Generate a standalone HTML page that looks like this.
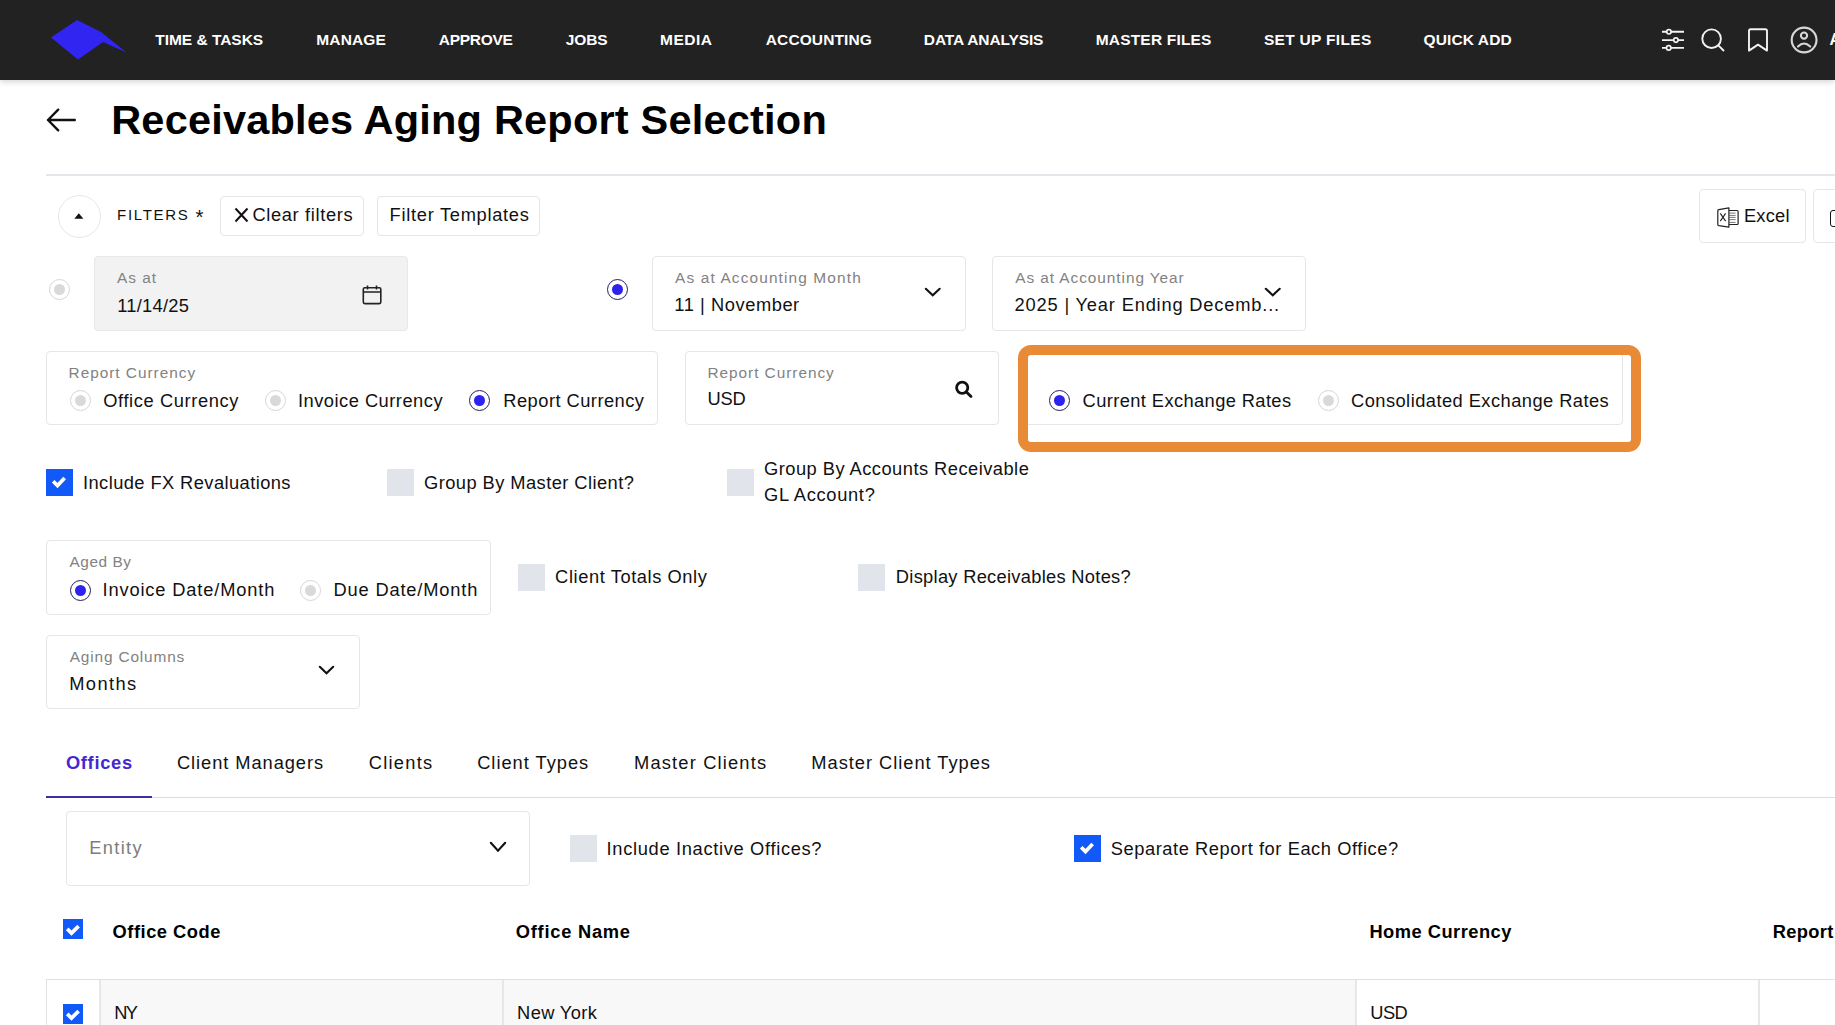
<!DOCTYPE html>
<html><head><meta charset="utf-8"><style>
html,body{margin:0;padding:0;width:1835px;height:1025px;overflow:hidden;background:#fff;position:relative}
.t{position:absolute;white-space:pre;font-family:'Liberation Sans', sans-serif}
.b{position:absolute}
</style></head><body>
<div class="b" style="left:0;top:0;width:1835px;height:80px;background:#222;box-shadow:0 2px 6px rgba(0,0,0,.17)"></div>
<svg class="b" style="left:0;top:0" width="140" height="80"><polygon points="51,37.5 77,20 101,32 126.5,52.5 103,42 78,59.5" fill="#3125f2"/></svg>
<svg class="b" style="left:1655px;top:20px" width="180" height="40" fill="none" stroke="#f2f2f2" stroke-width="1.9" stroke-linejoin="round">
 <g transform="translate(-1655,-20)">
  <path d="M1662 31.8 H1684 M1662 40.1 H1684 M1662 47.9 H1684"/>
  <circle cx="1668.9" cy="31.8" r="2.2" fill="#222" stroke-width="1.7"/>
  <circle cx="1675.9" cy="40.1" r="2.2" fill="#222" stroke-width="1.7"/>
  <circle cx="1668.7" cy="47.9" r="2.2" fill="#222" stroke-width="1.7"/>
  <circle cx="1711.6" cy="38.7" r="9.3"/>
  <path d="M1718.3 45.4 L1724 51"/>
  <path d="M1749 31 Q1749 29.3 1750.7 29.3 H1765.3 Q1767 29.3 1767 31 V50.6 L1758 44.6 L1749 50.6 Z"/>
  <circle cx="1804.1" cy="40" r="12.4" stroke="#d8d8d8" stroke-width="2.1"/>
  <circle cx="1804" cy="35.6" r="3.1" stroke="#d8d8d8" stroke-width="2.1"/>
  <path d="M1798 46.6 Q1804 40.5 1810.2 46.6" stroke="#d8d8d8" stroke-width="2.1" stroke-linecap="round"/>
 </g></svg>
<div class="t" style="left:1829.5px;top:28.5px;font-size:15.9px;line-height:22px;font-weight:700;color:#fff">A</div>
<svg class="b" style="left:40px;top:100px" width="45" height="40" fill="none" stroke="#111" stroke-width="2.4" stroke-linecap="round" stroke-linejoin="round"><path d="M8 20 H34.8 M18.2 9.7 L8 20 L18.2 30.3"/></svg>
<div class="b" style="left:46px;top:174px;width:1789px;height:2px;background:#e3e6ea"></div>
<div class="b" style="left:58px;top:195px;width:41px;height:41px;border:1px solid #e6e6e6;border-radius:50%"></div>
<svg class="b" style="left:70px;top:208px" width="20" height="16"><polygon points="4.3,10.8 8.8,5.3 13.4,10.8" fill="#111"/></svg>
<div class="b" style="left:220px;top:196px;width:142px;height:38px;border:1px solid #e6e6e6;border-radius:4px;background:#fff"></div>
<svg class="b" style="left:230px;top:203px" width="24" height="24" fill="none" stroke="#111" stroke-width="2"><path d="M5.5 5.5 L17.5 18.5 M17.5 5.5 L5.5 18.5"/></svg>
<div class="b" style="left:377px;top:196px;width:161px;height:38px;border:1px solid #e6e6e6;border-radius:4px;background:#fff"></div>
<div class="b" style="left:1699px;top:189px;width:105px;height:52px;border:1px solid #e6e6e6;border-radius:4px;background:#fff"></div>
<div class="b" style="left:1813px;top:189px;width:85px;height:52px;border:1px solid #e6e6e6;border-radius:4px;background:#fff"></div>
<svg class="b" style="left:1712px;top:202px" width="32" height="32" fill="none" stroke="#222" stroke-width="1.2" stroke-linejoin="round">
 <path d="M5.8 8.9 Q5.8 7.9 6.8 7.7 L16.9 5.9 V25.1 L6.8 23.6 Q5.8 23.4 5.8 22.4 Z"/>
 <path d="M16.9 8.5 H25.1 Q26.1 8.5 26.1 9.5 V21.5 Q26.1 22.5 25.1 22.5 H16.9"/>
 <path d="M17 11.1 H23.6 M17 13.4 H23.6 M17 15.4 H23.6 M17 17.6 H23.6 M17 20.4 H23.6" stroke-width="0.8" stroke="#555"/>
 <path d="M8.3 11.4 L13.6 19.1 M13.6 11.4 L8.3 19.1" stroke-width="1.1"/>
</svg>
<div class="b" style="left:1830px;top:210px;width:14px;height:17px;box-sizing:border-box;border:1.7px solid #111;border-radius:3px"></div>
<div class="b" style="left:49px;top:279px;width:19px;height:19px;border:1px solid #d6d6d6;border-radius:50%;background:#fff"></div><div class="b" style="left:54px;top:284px;width:11px;height:11px;border-radius:50%;background:#d9d9d9"></div>
<div class="b" style="left:94px;top:256px;width:312px;height:73px;border:1px solid #e8e8e8;border-radius:4px;background:#f2f2f2"></div>
<svg class="b" style="left:355px;top:280px" width="34" height="30" fill="none" stroke="#222" stroke-width="1.6">
 <rect x="8.3" y="7.8" width="17.5" height="15.8" rx="1.5"/>
 <path d="M8.3 12 H25.8 M12.5 5.5 V9.5 M21.5 5.5 V9.5"/>
</svg>
<div class="b" style="left:607px;top:279px;width:19px;height:19px;border:1px solid #22205e;border-radius:50%;background:#fff"></div><div class="b" style="left:612px;top:284px;width:11px;height:11px;border-radius:50%;background:#2e22ee"></div>
<div class="b" style="left:652px;top:256px;width:312px;height:73px;border:1px solid #e6e6e6;border-radius:4px;background:#fff"></div>
<svg class="b" style="left:923px;top:286px" width="19.5" height="12.5"><path d="M2.8 2.8 L9.75 9.2 L16.7 2.8" fill="none" stroke="#111" stroke-width="2.1" stroke-linecap="round" stroke-linejoin="miter"/></svg>
<div class="b" style="left:992px;top:256px;width:312px;height:73px;border:1px solid #e6e6e6;border-radius:4px;background:#fff"></div>
<svg class="b" style="left:1263px;top:285.5px" width="19.5" height="12.5"><path d="M2.8 2.8 L9.75 9.2 L16.7 2.8" fill="none" stroke="#111" stroke-width="2.1" stroke-linecap="round" stroke-linejoin="miter"/></svg>
<div class="b" style="left:46px;top:351px;width:610px;height:72px;border:1px solid #e6e6e6;border-radius:4px;background:#fff"></div>
<div class="b" style="left:70px;top:390px;width:19px;height:19px;border:1px solid #d6d6d6;border-radius:50%;background:#fff"></div><div class="b" style="left:75px;top:395px;width:11px;height:11px;border-radius:50%;background:#d9d9d9"></div>
<div class="b" style="left:265px;top:390px;width:19px;height:19px;border:1px solid #d6d6d6;border-radius:50%;background:#fff"></div><div class="b" style="left:270px;top:395px;width:11px;height:11px;border-radius:50%;background:#d9d9d9"></div>
<div class="b" style="left:469px;top:390px;width:19px;height:19px;border:1px solid #22205e;border-radius:50%;background:#fff"></div><div class="b" style="left:474px;top:395px;width:11px;height:11px;border-radius:50%;background:#2e22ee"></div>
<div class="b" style="left:685px;top:351px;width:312px;height:72px;border:1px solid #e6e6e6;border-radius:4px;background:#fff"></div>
<svg class="b" style="left:950px;top:376px" width="28" height="28" fill="none" stroke="#111" stroke-width="2.8"><circle cx="12.2" cy="11.8" r="5.6"/><path d="M16.4 16 L21 20.6" stroke-linecap="round"/></svg>
<div class="b" style="left:1024px;top:351px;width:597px;height:72px;border:1px solid #e6e6e6;border-radius:4px;background:#fff"></div>
<div class="b" style="left:1049px;top:390px;width:19px;height:19px;border:1px solid #22205e;border-radius:50%;background:#fff"></div><div class="b" style="left:1054px;top:395px;width:11px;height:11px;border-radius:50%;background:#2e22ee"></div>
<div class="b" style="left:1318px;top:390px;width:19px;height:19px;border:1px solid #d6d6d6;border-radius:50%;background:#fff"></div><div class="b" style="left:1323px;top:395px;width:11px;height:11px;border-radius:50%;background:#d9d9d9"></div>
<div class="b" style="left:1018px;top:345px;width:623px;height:107px;box-sizing:border-box;border:10.5px solid #e98a37;border-radius:13px"></div>
<div class="b" style="left:46px;top:469px;width:27px;height:27px;background:#1159f9"></div><svg class="b" style="left:46px;top:469px" width="27" height="27"><path d="M7.2 12.2 L11.5 16.5 L18.65 9" fill="none" stroke="#fff" stroke-width="3.7"/></svg>
<div class="b" style="left:387px;top:469px;width:27px;height:27px;background:#e1e4ea"></div>
<div class="b" style="left:727px;top:469px;width:27px;height:27px;background:#e1e4ea"></div>
<div class="b" style="left:46px;top:540px;width:443px;height:73px;border:1px solid #e6e6e6;border-radius:4px;background:#fff"></div>
<div class="b" style="left:70px;top:580px;width:19px;height:19px;border:1px solid #22205e;border-radius:50%;background:#fff"></div><div class="b" style="left:75px;top:585px;width:11px;height:11px;border-radius:50%;background:#2e22ee"></div>
<div class="b" style="left:300px;top:580px;width:19px;height:19px;border:1px solid #d6d6d6;border-radius:50%;background:#fff"></div><div class="b" style="left:305px;top:585px;width:11px;height:11px;border-radius:50%;background:#d9d9d9"></div>
<div class="b" style="left:518px;top:564px;width:27px;height:27px;background:#e1e4ea"></div>
<div class="b" style="left:858px;top:564px;width:27px;height:27px;background:#e1e4ea"></div>
<div class="b" style="left:46px;top:635px;width:312px;height:72px;border:1px solid #e6e6e6;border-radius:4px;background:#fff"></div>
<svg class="b" style="left:317px;top:664px" width="19" height="12.5"><path d="M2.8 2.8 L9.5 9.2 L16.2 2.8" fill="none" stroke="#111" stroke-width="2.1" stroke-linecap="round" stroke-linejoin="miter"/></svg>
<div class="b" style="left:46px;top:797px;width:1789px;height:1px;background:#dcdcdc"></div>
<div class="b" style="left:46px;top:796px;width:106px;height:1.5px;background:#3d2f9e"></div>
<div class="b" style="left:66px;top:811px;width:462px;height:73px;border:1px solid #e6e6e6;border-radius:4px;background:#fff"></div>
<svg class="b" style="left:487.5px;top:840px" width="20.0" height="14"><path d="M2.8 2.8 L10.0 10.7 L17.2 2.8" fill="none" stroke="#111" stroke-width="2.1" stroke-linecap="round" stroke-linejoin="miter"/></svg>
<div class="b" style="left:570px;top:835px;width:27px;height:27px;background:#e1e4ea"></div>
<div class="b" style="left:1074px;top:835px;width:27px;height:27px;background:#1159f9"></div><svg class="b" style="left:1074px;top:835px" width="27" height="27"><path d="M7.2 12.2 L11.5 16.5 L18.65 9" fill="none" stroke="#fff" stroke-width="3.7"/></svg>
<div class="b" style="left:63px;top:919px;width:20px;height:20px;background:#1159f9"></div><svg class="b" style="left:63px;top:919px" width="20" height="20"><path d="M4.2 9.9 L8.5 14.1 L15.6 7.1" fill="none" stroke="#fff" stroke-width="3.7"/></svg>
<div class="b" style="left:100px;top:979px;width:1256px;height:46px;background:#f8f8f9"></div>
<div class="b" style="left:46px;top:979px;width:1789px;height:1px;background:#e1e1e1"></div>
<div class="b" style="left:46px;top:979px;width:1px;height:46px;background:#e1e1e1"></div>
<div class="b" style="left:99px;top:980px;width:2px;height:45px;background:#e7e7e7"></div>
<div class="b" style="left:502px;top:980px;width:2px;height:45px;background:#e7e7e7"></div>
<div class="b" style="left:1355px;top:980px;width:2px;height:45px;background:#e7e7e7"></div>
<div class="b" style="left:1758px;top:980px;width:2px;height:45px;background:#e7e7e7"></div>
<div class="b" style="left:63px;top:1004px;width:20px;height:20px;background:#1159f9"></div><svg class="b" style="left:63px;top:1004px" width="20" height="20"><path d="M4.2 9.9 L8.5 14.1 L15.6 7.1" fill="none" stroke="#fff" stroke-width="3.7"/></svg>
<div class="t" style="left:155.2px;top:30px;font-size:15.5px;line-height:20px;font-weight:700;color:#fff;letter-spacing:-0.018px">TIME &amp; TASKS</div>
<div class="t" style="left:316.3px;top:30px;font-size:15.5px;line-height:20px;font-weight:700;color:#fff;letter-spacing:0.140px">MANAGE</div>
<div class="t" style="left:438.8px;top:30px;font-size:15.5px;line-height:20px;font-weight:700;color:#fff;letter-spacing:-0.300px">APPROVE</div>
<div class="t" style="left:565.7px;top:30px;font-size:15.5px;line-height:20px;font-weight:700;color:#fff;letter-spacing:-0.067px">JOBS</div>
<div class="t" style="left:660.0px;top:30px;font-size:15.5px;line-height:20px;font-weight:700;color:#fff;letter-spacing:0.500px">MEDIA</div>
<div class="t" style="left:765.8px;top:30px;font-size:15.5px;line-height:20px;font-weight:700;color:#fff;letter-spacing:0.100px">ACCOUNTING</div>
<div class="t" style="left:923.8px;top:30px;font-size:15.5px;line-height:20px;font-weight:700;color:#fff;letter-spacing:-0.100px">DATA ANALYSIS</div>
<div class="t" style="left:1095.7px;top:30px;font-size:15.5px;line-height:20px;font-weight:700;color:#fff;letter-spacing:0.191px">MASTER FILES</div>
<div class="t" style="left:1263.9px;top:30px;font-size:15.5px;line-height:20px;font-weight:700;color:#fff;letter-spacing:0.309px">SET UP FILES</div>
<div class="t" style="left:1423.6px;top:30px;font-size:15.5px;line-height:20px;font-weight:700;color:#fff;letter-spacing:0.100px">QUICK ADD</div>
<div class="t" style="left:111.2px;top:93px;font-size:41.5px;line-height:54px;font-weight:700;color:#000;letter-spacing:0.206px">Receivables Aging Report Selection</div>
<div class="t" style="left:117.1px;top:205px;font-size:15.0px;line-height:20px;font-weight:400;color:#111;letter-spacing:1.700px">FILTERS</div>
<div class="t" style="left:195.5px;top:203px;font-size:20.5px;line-height:27px;font-weight:400;color:#111;letter-spacing:0.000px">*</div>
<div class="t" style="left:252.4px;top:203px;font-size:18.3px;line-height:24px;font-weight:400;color:#111;letter-spacing:0.650px">Clear filters</div>
<div class="t" style="left:389.6px;top:203px;font-size:18.3px;line-height:24px;font-weight:400;color:#111;letter-spacing:0.707px">Filter Templates</div>
<div class="t" style="left:1743.9px;top:204px;font-size:18.3px;line-height:24px;font-weight:400;color:#111;letter-spacing:0.225px">Excel</div>
<div class="t" style="left:117.0px;top:268px;font-size:15.4px;line-height:20px;font-weight:400;color:#828282;letter-spacing:1.000px">As at</div>
<div class="t" style="left:117.3px;top:294px;font-size:18.3px;line-height:24px;font-weight:400;color:#111;letter-spacing:0.243px">11/14/25</div>
<div class="t" style="left:675.1px;top:268px;font-size:15.4px;line-height:20px;font-weight:400;color:#828282;letter-spacing:1.138px">As at Accounting Month</div>
<div class="t" style="left:674.3px;top:293px;font-size:18.3px;line-height:24px;font-weight:400;color:#111;letter-spacing:0.558px">11 | November</div>
<div class="t" style="left:1015.2px;top:268px;font-size:15.4px;line-height:20px;font-weight:400;color:#828282;letter-spacing:0.940px">As at Accounting Year</div>
<div class="t" style="left:1014.6px;top:293px;font-size:18.3px;line-height:24px;font-weight:400;color:#111;letter-spacing:0.815px">2025 | Year Ending Decemb...</div>
<div class="t" style="left:68.6px;top:363px;font-size:15.4px;line-height:20px;font-weight:400;color:#828282;letter-spacing:0.971px">Report Currency</div>
<div class="t" style="left:103.2px;top:389px;font-size:18.3px;line-height:24px;font-weight:400;color:#111;letter-spacing:0.614px">Office Currency</div>
<div class="t" style="left:297.9px;top:389px;font-size:18.3px;line-height:24px;font-weight:400;color:#111;letter-spacing:0.500px">Invoice Currency</div>
<div class="t" style="left:503.3px;top:389px;font-size:18.3px;line-height:24px;font-weight:400;color:#111;letter-spacing:0.471px">Report Currency</div>
<div class="t" style="left:707.4px;top:363px;font-size:15.4px;line-height:20px;font-weight:400;color:#828282;letter-spacing:0.964px">Report Currency</div>
<div class="t" style="left:707.4px;top:387px;font-size:18.3px;line-height:24px;font-weight:400;color:#111;letter-spacing:-0.200px">USD</div>
<div class="t" style="left:1082.6px;top:389px;font-size:18.3px;line-height:24px;font-weight:400;color:#111;letter-spacing:0.395px">Current Exchange Rates</div>
<div class="t" style="left:1351.0px;top:389px;font-size:18.3px;line-height:24px;font-weight:400;color:#111;letter-spacing:0.454px">Consolidated Exchange Rates</div>
<div class="t" style="left:83.0px;top:471px;font-size:18.3px;line-height:24px;font-weight:400;color:#111;letter-spacing:0.423px">Include FX Revaluations</div>
<div class="t" style="left:424.0px;top:471px;font-size:18.3px;line-height:24px;font-weight:400;color:#111;letter-spacing:0.441px">Group By Master Client?</div>
<div class="t" style="left:764.0px;top:457px;font-size:18.3px;line-height:24px;font-weight:400;color:#111;letter-spacing:0.474px">Group By Accounts Receivable</div>
<div class="t" style="left:764.0px;top:483px;font-size:18.3px;line-height:24px;font-weight:400;color:#111;letter-spacing:0.680px">GL Account?</div>
<div class="t" style="left:69.5px;top:552px;font-size:15.4px;line-height:20px;font-weight:400;color:#828282;letter-spacing:0.533px">Aged By</div>
<div class="t" style="left:102.5px;top:578px;font-size:18.3px;line-height:24px;font-weight:400;color:#111;letter-spacing:0.841px">Invoice Date/Month</div>
<div class="t" style="left:333.5px;top:578px;font-size:18.3px;line-height:24px;font-weight:400;color:#111;letter-spacing:0.823px">Due Date/Month</div>
<div class="t" style="left:555.1px;top:565px;font-size:18.3px;line-height:24px;font-weight:400;color:#111;letter-spacing:0.582px">Client Totals Only</div>
<div class="t" style="left:895.8px;top:565px;font-size:18.3px;line-height:24px;font-weight:400;color:#111;letter-spacing:0.292px">Display Receivables Notes?</div>
<div class="t" style="left:69.7px;top:647px;font-size:15.4px;line-height:20px;font-weight:400;color:#828282;letter-spacing:0.850px">Aging Columns</div>
<div class="t" style="left:69.2px;top:672px;font-size:18.3px;line-height:24px;font-weight:400;color:#111;letter-spacing:1.420px">Months</div>
<div class="t" style="left:65.9px;top:751px;font-size:18.3px;line-height:24px;font-weight:700;color:#4327d0;letter-spacing:0.700px">Offices</div>
<div class="t" style="left:176.9px;top:751px;font-size:18.3px;line-height:24px;font-weight:400;color:#111;letter-spacing:0.936px">Client Managers</div>
<div class="t" style="left:368.7px;top:751px;font-size:18.3px;line-height:24px;font-weight:400;color:#111;letter-spacing:1.283px">Clients</div>
<div class="t" style="left:477.2px;top:751px;font-size:18.3px;line-height:24px;font-weight:400;color:#111;letter-spacing:0.982px">Client Types</div>
<div class="t" style="left:634.1px;top:751px;font-size:18.3px;line-height:24px;font-weight:400;color:#111;letter-spacing:1.162px">Master Clients</div>
<div class="t" style="left:811.3px;top:751px;font-size:18.3px;line-height:24px;font-weight:400;color:#111;letter-spacing:0.967px">Master Client Types</div>
<div class="t" style="left:89.2px;top:836px;font-size:18.3px;line-height:24px;font-weight:400;color:#7d7d7d;letter-spacing:1.340px">Entity</div>
<div class="t" style="left:606.6px;top:837px;font-size:18.3px;line-height:24px;font-weight:400;color:#111;letter-spacing:0.671px">Include Inactive Offices?</div>
<div class="t" style="left:1110.7px;top:837px;font-size:18.3px;line-height:24px;font-weight:400;color:#111;letter-spacing:0.565px">Separate Report for Each Office?</div>
<div class="t" style="left:112.6px;top:920px;font-size:18.3px;line-height:24px;font-weight:700;color:#000;letter-spacing:0.520px">Office Code</div>
<div class="t" style="left:515.8px;top:920px;font-size:18.3px;line-height:24px;font-weight:700;color:#000;letter-spacing:0.750px">Office Name</div>
<div class="t" style="left:1369.4px;top:920px;font-size:18.3px;line-height:24px;font-weight:700;color:#000;letter-spacing:0.492px">Home Currency</div>
<div class="t" style="left:1772.7px;top:920px;font-size:18.3px;line-height:24px;font-weight:700;color:#000;letter-spacing:0.360px">Report</div>
<div class="t" style="left:114.2px;top:1001px;font-size:18.3px;line-height:24px;font-weight:400;color:#111;letter-spacing:-1.600px">NY</div>
<div class="t" style="left:517.1px;top:1001px;font-size:18.3px;line-height:24px;font-weight:400;color:#111;letter-spacing:0.357px">New York</div>
<div class="t" style="left:1370.2px;top:1001px;font-size:18.3px;line-height:24px;font-weight:400;color:#111;letter-spacing:-0.500px">USD</div>
</body></html>
